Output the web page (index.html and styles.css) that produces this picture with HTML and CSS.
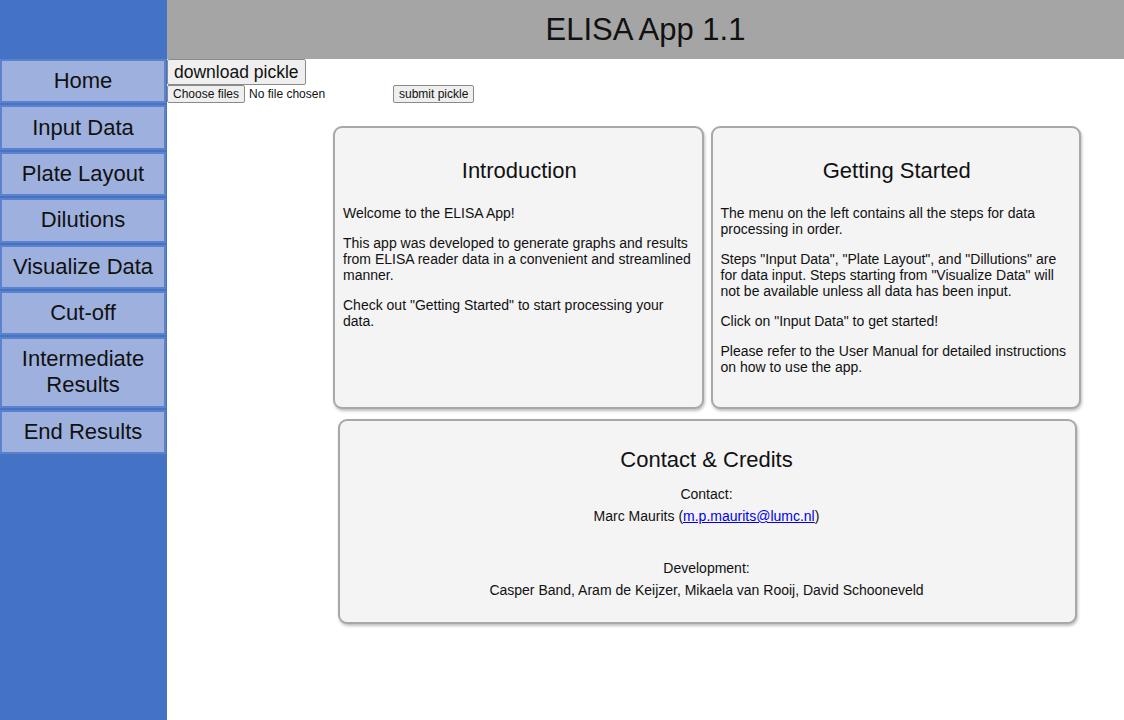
FILE: index.html
```html
<!DOCTYPE html>
<html>
<head>
<meta charset="utf-8">
<title>ELISA App 1.1</title>
<link rel="stylesheet" href="styles.css">
</head>
<body>
<div class="app">
  <aside class="sidebar">
    <div class="sidebar-top"></div>
    <nav class="menu">
      <div class="menu-item">Home</div>
      <div class="menu-item">Input Data</div>
      <div class="menu-item">Plate Layout</div>
      <div class="menu-item">Dilutions</div>
      <div class="menu-item">Visualize Data</div>
      <div class="menu-item">Cut-off</div>
      <div class="menu-item">Intermediate Results</div>
      <div class="menu-item">End Results</div>
    </nav>
  </aside>
  <div class="main">
    <header class="header"><h1 class="title">ELISA App 1.1</h1></header>
    <div class="tools">
      <button class="btn btn-large">download pickle</button>
      <div class="file-row">
        <div class="file-input">
          <span class="btn btn-small">Choose files</span>
          <span class="file-label">No file chosen</span>
        </div>
        <button class="btn btn-small">submit pickle</button>
      </div>
    </div>
    <div class="content">
      <div class="card-row">
        <section class="card">
          <h2 class="card-title">Introduction</h2>
          <p>Welcome to the ELISA App!</p>
          <p>This app was developed to generate graphs and results from ELISA reader data in a convenient and streamlined manner.</p>
          <p>Check out "Getting Started" to start processing your data.</p>
        </section>
        <section class="card">
          <h2 class="card-title">Getting Started</h2>
          <p>The menu on the left contains all the steps for data processing in order.</p>
          <p>Steps "Input Data", "Plate Layout", and "Dillutions" are for data input. Steps starting from "Visualize Data" will not be available unless all data has been input.</p>
          <p>Click on "Input Data" to get started!</p>
          <p>Please refer to the User Manual for detailed instructions on how to use the app.</p>
        </section>
      </div>
      <section class="card card-wide">
        <h2 class="card-title">Contact &amp; Credits</h2>
        <div class="line">Contact:</div>
        <div class="line">Marc Maurits (<a href="#">m.p.maurits@lumc.nl</a>)</div>
        <div class="spacer"></div>
        <div class="line">Development:</div>
        <div class="line">Casper Band, Aram de Keijzer, Mikaela van Rooij, David Schooneveld</div>
      </section>
    </div>
  </div>
</div>
</body>
</html>
```

FILE: styles.css
```css
html, body {
  margin: 0;
  padding: 0;
  height: 100%;
}
body {
  font-family: "Liberation Sans", Arial, sans-serif;
  color: #111;
  background: #fff;
}
.app {
  display: flex;
  min-height: 720px;
}
.sidebar {
  width: 167px;
  flex: none;
  background: #4472c4;
  min-height: 720px;
}
.sidebar-top {
  height: 59px;
}
.menu {
  display: flex;
  flex-direction: column;
  gap: 2px;
  padding: 0 1px 0 0;
}
.menu-item {
  background: #9eb1de;
  border: 2px solid #5b82cc;
  padding: 7.2px 4px;
  font-size: 22px;
  line-height: 26px;
  text-align: center;
  color: #111;
}
.main {
  flex: 1;
  display: flex;
  flex-direction: column;
}
.header {
  height: 59px;
  background: #a5a5a5;
  display: flex;
  align-items: center;
  justify-content: center;
}
.title {
  margin: 0;
  font-weight: normal;
  font-size: 31px;
  color: #111;
}
.tools {
  display: flex;
  flex-direction: column;
  align-items: flex-start;
}
.btn {
  font-family: "Liberation Sans", Arial, sans-serif;
  background: #efefef;
  border: 1px solid #8a8a8a;
  border-radius: 2px;
  color: #111;
  display: inline-block;
  box-sizing: border-box;
}
.btn-large {
  font-size: 17.5px;
  line-height: 20px;
  padding: 2px 6px 2px;
  height: 26px;
}
.btn-small {
  font-size: 12px;
  line-height: 14px;
  padding: 1px 5px;
  height: 18px;
}
.file-row {
  display: flex;
  align-items: center;
  margin-top: 0;
}
.file-input {
  width: 226px;
  display: flex;
  align-items: center;
}
.file-label {
  font-size: 12px;
  margin-left: 4px;
}
.content {
  padding: 23px 43px 0 166px;
  display: flex;
  flex-direction: column;
  gap: 10px;
}
.card-row {
  display: flex;
  gap: 7px;
}
.card {
  flex: 1;
  background: #f4f4f4;
  border: 2px solid #a8a8a8;
  border-radius: 9px;
  box-shadow: 1px 2px 3px rgba(0,0,0,0.25);
  padding: 30px 6px 10px 8px;
  height: 283px;
  box-sizing: border-box;
  font-size: 14px;
  line-height: 16px;
}
.card p {
  margin: 0 0 14px;
}
.card-title {
  margin: 0 0 22px;
  font-weight: normal;
  font-size: 22px;
  line-height: 25px;
  text-align: center;
}
.card-wide {
  flex: none;
  height: 205px;
  margin: 0 4px 0 5px;
  text-align: center;
  padding: 26px 8px 10px 6px;
}
.card-wide .card-title {
  margin-bottom: 11px;
}
.line {
  line-height: 22px;
}
.spacer {
  height: 30px;
}
a {
  color: #0000ee;
}
```
